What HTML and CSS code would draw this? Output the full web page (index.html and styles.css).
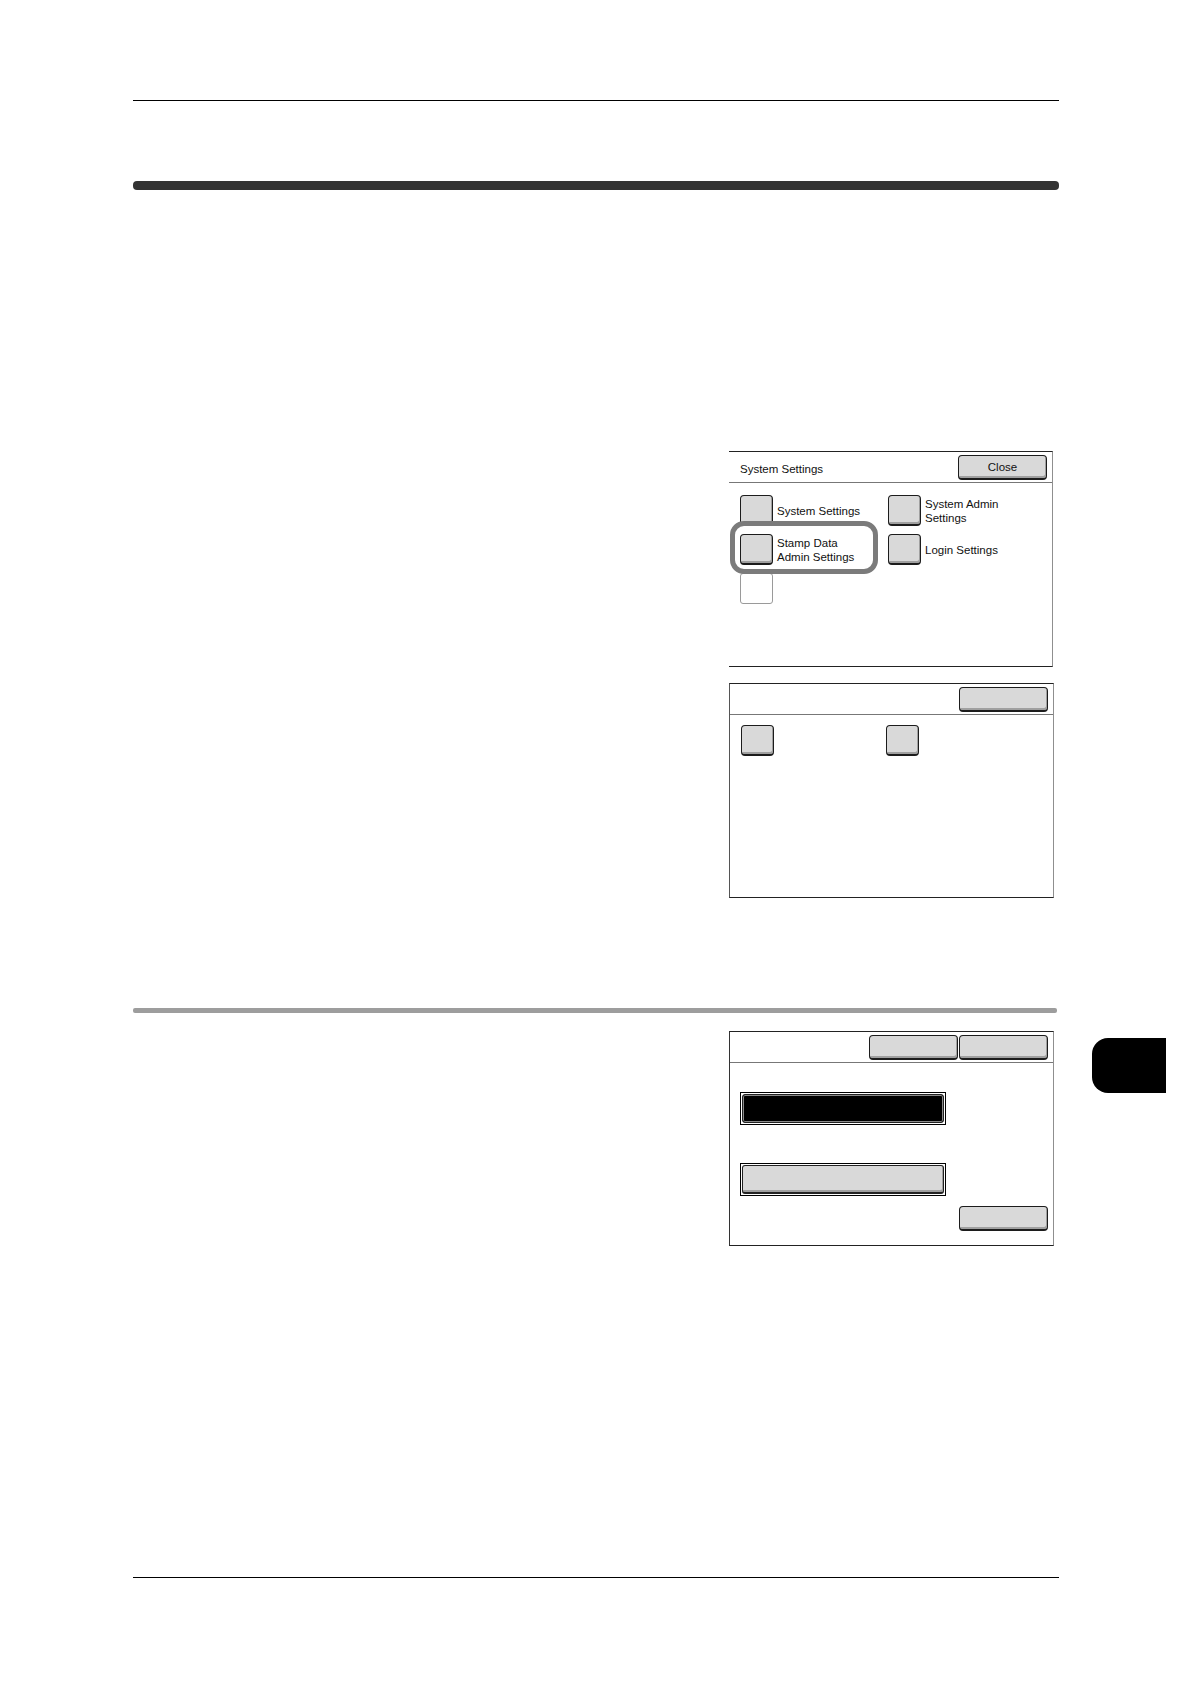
FILE: index.html
```html
<!DOCTYPE html>
<html lang="en">
<head>
<meta charset="utf-8">
<title>System Settings</title>
<link rel="stylesheet" href="styles.css">
</head>
<body>
<div class="page">
  <div class="rule-top"></div>
  <div class="title-bar"></div>

  <div class="section section-one">
    <div class="text-col"></div>
    <div class="fig-col">
      <div class="panel panel-one">
        <div class="panel-head">
          <span class="panel-title">System Settings</span>
          <span class="btn btn-wide">Close</span>
        </div>
        <div class="panel-body grid-one">
          <div class="item"><span class="btn btn-sq"></span><span class="label">System Settings</span></div>
          <div class="item"><span class="btn btn-sq"></span><span class="label">System Admin<br>Settings</span></div>
          <div class="item"><span class="btn btn-sq"></span><span class="label">Stamp Data<br>Admin Settings</span></div>
          <div class="item"><span class="btn btn-sq"></span><span class="label">Login Settings</span></div>
          <div class="item"><span class="btn-empty"></span></div>
        </div>
        <div class="highlight"></div>
      </div>

      <div class="panel panel-two">
        <div class="panel-head">
          <span class="panel-title"></span>
          <span class="btn btn-wide"></span>
        </div>
        <div class="panel-body grid-two">
          <div class="item"><span class="btn btn-sq"></span></div>
          <div class="item"><span class="btn btn-sq"></span></div>
        </div>
      </div>
    </div>
  </div>

  <div class="sub-rule"></div>

  <div class="section section-two">
    <div class="text-col"></div>
    <div class="fig-col">
      <div class="panel panel-three">
        <div class="panel-head">
          <span class="panel-title"></span>
          <span class="head-btns"><span class="btn btn-wide"></span><span class="btn btn-wide"></span></span>
        </div>
        <div class="panel-body body-three">
          <div class="frame"><span class="bar bar-on"></span></div>
          <div class="frame frame-second"><span class="bar bar-off"></span></div>
          <div class="bottom-row"><span class="btn btn-wide"></span></div>
        </div>
      </div>
    </div>
  </div>

  <div class="rule-bottom"></div>
</div>
<div class="side-tab"></div>
</body>
</html>
```

FILE: styles.css
```css
* { box-sizing: border-box; }

html, body {
  margin: 0;
  padding: 0;
  background: #ffffff;
}

body {
  width: 1190px;
  height: 1684px;
  position: relative;
  font-family: "Liberation Sans", Arial, sans-serif;
  font-size: 11.5px;
  color: #111111;
}

.page {
  margin-left: 133px;
  width: 926px;
  padding-top: 100px;
}

.rule-top {
  border-top: 1px solid #000000;
}

.title-bar {
  margin-top: 80px;
  height: 9px;
  background: #333333;
  border-radius: 4px;
}

.section {
  display: flex;
}

.section-one { margin-top: 261px; }
.section-two { margin-top: 18px; }

.text-col {
  width: 596px;
  flex: none;
}

.fig-col {
  width: 324px;
  flex: none;
  display: flex;
  flex-direction: column;
  gap: 16px;
}

.panel {
  position: relative;
  width: 324px;
  height: 216px;
  border-top: 1px solid #222222;
  border-bottom: 1px solid #222222;
  border-right: 1px solid #8f8f8f;
  background: #ffffff;
}

.panel-two {
  width: 325px;
  height: 215px;
  border-left: 1px solid #555555;
}

.panel-three {
  width: 325px;
  height: 215px;
  border-left: 1px solid #333333;
}

.panel-head {
  height: 31px;
  border-bottom: 1px solid #777777;
  display: flex;
  align-items: center;
  justify-content: space-between;
  padding: 0 5px 0 11px;
}

.panel-title {
  font-size: 11.5px;
  line-height: 14px;
  padding-top: 3px;
}

.head-btns {
  display: flex;
  gap: 1px;
}

.btn {
  display: inline-block;
  background: #d9d9d9;
  border: 1px solid #1c1c1c;
  border-bottom-width: 2px;
  border-radius: 4px;
  box-shadow: inset -1px -2px 0 #a0a0a0;
  text-align: center;
}

.btn-wide {
  width: 89px;
  height: 25px;
  line-height: 23px;
  font-size: 11.5px;
}

.btn-sq {
  width: 33px;
  height: 31px;
  flex: none;
}

.btn-empty {
  display: inline-block;
  width: 33px;
  height: 31px;
  border: 1px solid #9a9a9a;
  border-radius: 3px;
  background: #ffffff;
}

.panel-body {
  position: relative;
}

.grid-one {
  display: grid;
  grid-template-columns: 148px 140px;
  row-gap: 8px;
  padding: 12px 0 0 11px;
}

.grid-two {
  display: grid;
  grid-template-columns: 145px 140px;
  padding: 10px 0 0 11px;
}

.item {
  display: flex;
  align-items: center;
  height: 31px;
}

.label {
  margin-left: 4px;
  font-size: 11.5px;
  line-height: 14px;
  white-space: nowrap;
}

.highlight {
  position: absolute;
  left: 1px;
  top: 69px;
  width: 148px;
  height: 53px;
  border: 5px solid #7b7b7b;
  border-radius: 14px;
}

.body-three {
  padding: 29px 5px 0 10px;
}

.frame {
  width: 206px;
  height: 33px;
  border: 1px solid #000000;
  padding: 1px;
  background: #ffffff;
}

.frame-second {
  margin-top: 38px;
}

.bar {
  display: block;
  height: 29px;
  border: 1px solid #222222;
  border-radius: 3px;
}

.bar-on {
  background: #000000;
  box-shadow: inset 0 0 0 1px #8a8a8a, inset 0 0 0 2px #000000;
}

.bar-off {
  background: #d9d9d9;
  border-bottom-width: 2px;
  box-shadow: inset -1px -2px 0 #a0a0a0;
}

.bottom-row {
  display: flex;
  justify-content: flex-end;
  margin-top: 10px;
}

.sub-rule {
  margin-top: 110px;
  width: 924px;
  height: 5px;
  background: #9d9d9d;
  border-radius: 2px;
}

.rule-bottom {
  margin-top: 331px;
  border-top: 1px solid #000000;
}

.side-tab {
  position: absolute;
  left: 1092px;
  top: 1038px;
  width: 74px;
  height: 55px;
  background: #000000;
  border-radius: 16px 0 0 16px;
}
```
